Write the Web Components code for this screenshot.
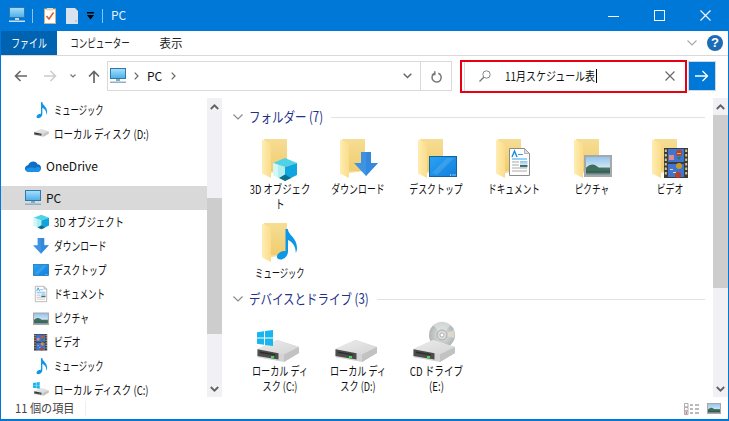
<!DOCTYPE html>
<html lang="ja"><head><meta charset="utf-8"><title>PC</title>
<style>html,body{margin:0;padding:0;background:#fff}</style></head><body>
<x-explorer>
  <x-titlebar slot="top"></x-titlebar>
  <x-ribbon slot="top"></x-ribbon>
  <x-navbar slot="top"></x-navbar>
  <x-sidebar slot="left">
    <x-row icon="note" lvl="1"><x-t style="--sx:.69">ミュージック</x-t></x-row>
    <x-row icon="sdrive" lvl="1"><x-t style="--sx:.79">ローカル ディスク (D:)</x-t></x-row>
    <x-row icon="onedrive" lvl="0" gap><x-t>OneDrive</x-t></x-row>
    <x-row icon="pc" lvl="0" gap selected><x-t>PC</x-t></x-row>
    <x-row icon="cube" lvl="1"><x-t style="--sx:.78">3D オブジェクト</x-t></x-row>
    <x-row icon="arrow" lvl="1"><x-t style="--sx:.73">ダウンロード</x-t></x-row>
    <x-row icon="screen" lvl="1"><x-t style="--sx:.73">デスクトップ</x-t></x-row>
    <x-row icon="doc" lvl="1"><x-t style="--sx:.71">ドキュメント</x-t></x-row>
    <x-row icon="pic" lvl="1"><x-t style="--sx:.73">ピクチャ</x-t></x-row>
    <x-row icon="film" lvl="1"><x-t style="--sx:.74">ビデオ</x-t></x-row>
    <x-row icon="note" lvl="1"><x-t style="--sx:.69">ミュージック</x-t></x-row>
    <x-row icon="sdrivec" lvl="1"><x-t style="--sx:.79">ローカル ディスク (C:)</x-t></x-row>
  </x-sidebar>
  <x-scrollbar slot="left" style="--top:83px;--thumb:136px"></x-scrollbar>
  <x-content slot="main">
    <x-group head="フォルダー (7)" w="90" style="--sx:.82">
      <x-item icon="f3d"><x-t style="--o:center;--sx:.78;--w:82px;--ws:normal">3D オブジェクト</x-t></x-item>
      <x-item icon="fdl"><x-t style="--o:center;--sx:.74">ダウンロード</x-t></x-item>
      <x-item icon="fdesk"><x-t style="--o:center;--sx:.74">デスクトップ</x-t></x-item>
      <x-item icon="fdoc"><x-t style="--o:center;--sx:.72">ドキュメント</x-t></x-item>
      <x-item icon="fpic"><x-t style="--o:center;--sx:.72">ピクチャ</x-t></x-item>
      <x-item icon="fvid"><x-t style="--o:center;--sx:.74">ビデオ</x-t></x-item>
      <x-item icon="fnote"><x-t style="--o:center;--sx:.69">ミュージック</x-t></x-item>
    </x-group>
    <x-group head="デバイスとドライブ (3)" w="146" style="--sx:.82;margin-top:7px">
      <x-item icon="dc"><x-t style="--o:center;--sx:.76;--w:80px;--ws:normal">ローカル ディスク (C:)</x-t></x-item>
      <x-item icon="dd"><x-t style="--o:center;--sx:.76;--w:80px;--ws:normal">ローカル ディスク (D:)</x-t></x-item>
      <x-item icon="de"><x-t style="--o:center;--sx:.8;--w:85px;--ws:normal">CD ドライブ (E:)</x-t></x-item>
    </x-group>
  </x-content>
  <x-scrollbar slot="right" style="--top:0px;--thumb:173px"></x-scrollbar>
  <x-statusbar slot="bottom"></x-statusbar>
</x-explorer>
<script>
const FONT = '"Noto Sans CJK JP","Noto Sans",sans-serif';
const svg = (w,h,body) => `<svg xmlns="http://www.w3.org/2000/svg" width="${w}" height="${h}" viewBox="0 0 ${w} ${h}" style="display:block;overflow:visible">${body}</svg>`;
const G = `<defs>
<linearGradient id="gs" x1="0" y1="0" x2="0" y2="1"><stop offset="0" stop-color="#a9e0fb"/><stop offset="1" stop-color="#4aaeea"/></linearGradient>
<linearGradient id="gb" x1="0" y1="0" x2="0" y2="1"><stop offset="0" stop-color="#f6dd95"/><stop offset="1" stop-color="#f0cd6e"/></linearGradient>
<linearGradient id="gf" x1="0" y1="0" x2="1" y2="0"><stop offset="0" stop-color="#ffedb2"/><stop offset="1" stop-color="#fbdc8a"/></linearGradient>
<linearGradient id="ga" x1="0" y1="0" x2="0" y2="1"><stop offset="0" stop-color="#3f8fe0"/><stop offset="1" stop-color="#3a97ea"/></linearGradient>
<linearGradient id="gd" x1="0" y1="0" x2="1" y2="1"><stop offset="0" stop-color="#2aa3f3"/><stop offset="1" stop-color="#0f7fdd"/></linearGradient>
<linearGradient id="gk" x1="0" y1="0" x2="0" y2="1"><stop offset="0" stop-color="#8dc2ee"/><stop offset=".55" stop-color="#cfe4f3"/><stop offset=".6" stop-color="#4d7d6a"/><stop offset=".8" stop-color="#36574e"/><stop offset="1" stop-color="#a9c6d6"/></linearGradient>
<linearGradient id="gt" x1="0" y1="0" x2="1" y2="1"><stop offset="0" stop-color="#ececec"/><stop offset="1" stop-color="#d4d4d4"/></linearGradient>
<radialGradient id="gc" cx=".5" cy=".5" r=".55"><stop offset="0" stop-color="#eeeeee"/><stop offset=".5" stop-color="#c9cccc"/><stop offset="1" stop-color="#a9b0b0"/></radialGradient>
</defs>`;
const P = {
 folder:`<path d="M8 2H31V34H15Z" fill="url(#gb)"/><path d="M6 2.500 15 6.500V41L6 36.500Z" fill="url(#gf)"/><path d="M15 34H31L15 36Z" fill="#e9c566" opacity=".6"/>`,
 cube:`<path d="M13 1 25 6 13 10 1 6Z" fill="#4fd2e6"/><path d="M1 6 13 10V24L1 18Z" fill="#aeeef1"/><path d="M25 6 13 10V24L25 18Z" fill="#0fa6df"/><path d="M7 21 13 17.500 19 21 13 24Z" fill="#0c6f8c"/><path d="M1 6 6 7.700V20.500L1 18Z" fill="#dcf9f9" opacity=".8"/>`,
 arrow:`<path d="M7 0H17V11H24L12 24 0 11H7Z" fill="url(#ga)"/><path d="M12 0H17V11H24L12 24Z" fill="#2f80d6" opacity=".55"/>`,
 screen:`<rect x=".5" y=".5" width="27" height="20" fill="url(#gd)" stroke="#12639f"/><path d="M3 17 18 2H25L8 19Z" fill="#fff" opacity=".12"/><path d="M21 18.500h1v1h-1zM23.500 18.500h1v1h-1zM25.500 18.500h1v1h-1z" fill="#fff"/>`,
 doc:`<path d="M.5.500H15.500L20.500 5.500V27.500H.5Z" fill="#fff" stroke="#8b8b8b"/><path d="M15.500.500V5.500H20.500Z" fill="#dcdcdc" stroke="#8b8b8b" stroke-width=".6"/><path d="M3 9 5.500 3 8 9" fill="none" stroke="#1b8be0" stroke-width="1.400"/><path d="M9 6.500h5M3 11h15" stroke="#3aa0ea" stroke-width="1.200"/><path d="M3 14h7M3 17h7M3 20h15M3 23h15" stroke="#a8a8a8"/><rect x="11" y="13" width="7.500" height="6.500" fill="url(#gk)"/>`,
 pic:`<rect x="1" y="1" width="26" height="20" fill="url(#gk)" stroke="#a8a8a8" stroke-width="2"/><path d="M2 13C7 8 11 9 15 13L26 15V16H2Z" fill="#3e6e5c"/>`,
 film:`<rect width="24" height="30" fill="#3b3b3b"/><rect x="4" y="1" width="16" height="13" fill="#3f74d2"/><rect x="4" y="16" width="16" height="13" fill="#3f74d2"/><path d="M.8 1.500h2v2.400h-2zM.8 6h2v2.400h-2zM.8 10.500h2v2.400h-2zM.8 15h2v2.400h-2zM.8 19.500h2v2.400h-2zM.8 24h2v2.400h-2zM21.200 1.500h2v2.400h-2zM21.200 6h2v2.400h-2zM21.200 10.500h2v2.400h-2zM21.200 15h2v2.400h-2zM21.200 19.500h2v2.400h-2zM21.200 24h2v2.400h-2z" fill="#d8c98c"/><circle cx="15" cy="5" r="3" fill="#b8402a"/><path d="M13 5h4v1h-4z" fill="#e4b23a"/><path d="M13 9h4l-2 3z" fill="#2e7d3a"/><rect x="5" y="7" width="5" height="5" fill="#e08a8a"/><circle cx="15" cy="18" r="3" fill="#c99a2a"/><circle cx="14" cy="27" r="3" fill="#b8402a"/><path d="M6 21h3v1H6zM9 24h3v1H9z" fill="#f1dc7a"/>`,
 note:`<path d="M11 2V23.500C11 27.500 7.500 31.500 3.500 31.500 .500 31.500-1 29.500 .500 26.800 2 24.200 6 22.500 8.500 23.200V1H10.800C11 7 20 9.500 20 20 20 22 19.400 24 18.800 25 18.800 18 15 13.600 11 12Z" fill="#0c97e8" transform="translate(1 0)"/>`,
 drive:`<path d="M.5 9 19 .5C20 .100 21 .100 22 .400L42 7V13L27 22 1.500 17.500C.7 17.300 .3 16.800 .3 16Z" fill="#d4d4d4"/><path d="M.5 9 19 .5C20 .100 21 .100 22 .400L42 7 27 14.500Z" fill="url(#gt)"/><path d="M27 14.500 42 7V13L27 22Z" fill="#c2c2c2"/><path d="M.5 9.300 21.500 13.300V19.500L.5 16Z" fill="#4c4c4c"/><path d="M3 11.500 18 14.300V15.500L3 13Z" fill="#2c2c2c"/><rect x="14" y="16" width="3" height="2" fill="#3fdc4a"/>`,
 win:`<path d="M0 2.200 7 1.200V7.500H0ZM8 1 16 0V7.500H8ZM0 8.500H7V14.800L0 13.800ZM8 8.500H16V16L8 15Z" fill="#19b6ee"/>`,
 disc:`<circle cx="13" cy="13" r="13" fill="url(#gc)"/><path d="M13 13 4 3A13 13 0 0 1 22 3Z" fill="#e6eae6" opacity=".6"/><path d="M13 13 25 8A13 13 0 0 1 25 16Z" fill="#e8e2d0" opacity=".7"/><circle cx="13" cy="13" r="5" fill="#dcdcdc" stroke="#aaa"/><circle cx="13" cy="13" r="2" fill="#fff" stroke="#999" stroke-width=".7"/>`,
};
const at=(x,y,b,s)=>`<g transform="translate(${x} ${y})${s?` scale(${s})`:''}">${b}</g>`;
const I = {
 pc:()=>svg(16,16,G+`<rect x=".5" y=".5" width="15" height="10" fill="url(#gs)" stroke="#2e7aa8"/><rect x="6" y="11" width="4" height="2" fill="#8aa7b8"/><rect y="13.500" width="16" height="1.500" fill="#8fb0c6"/>`),
 note:()=>svg(16,16,at(3,-.5,P.note,.53)),
 sdrive:()=>svg(16,16,G+at(1,3,P.drive,.35)),
 sdrivec:()=>svg(16,16,G+at(1,6,P.drive,.35)+at(0,0,P.win,.42)),
 onedrive:()=>svg(16,16,`<path d="M4 14C1.500 14 0 12.500 0 10.500 0 8.500 1.500 7.500 3 7.300 3.800 5 6 3.500 8.300 3.500 10.300 3.500 11.800 4.500 12.500 6.200 14.500 6.300 16 7.800 16 10 16 12.300 14.500 14 12.500 14Z" fill="#0f6fc6"/><path d="M4 14C2.500 14 1 13 .7 11.500 3 9 8 9 10 10.500 12 8.500 15 8.500 15.600 11.500 15 13 14 14 12.500 14Z" fill="#1a93e6"/>`),
 cube:()=>svg(16,16,at(0,0,P.cube,.64)),
 arrow:()=>svg(16,16,G+at(0,0,P.arrow,.66)),
 screen:()=>svg(16,16,G+at(0,2,P.screen,.57)),
 doc:()=>svg(16,16,G+at(2,0,P.doc,.57)),
 pic:()=>svg(16,16,G+at(0,2.500,P.pic,.57)),
 film:()=>svg(16,16,at(1,0,P.film,.55)),
 f3d:()=>svg(48,46,G+P.folder+at(16,20,P.cube)),
 fdl:()=>svg(48,46,G+P.folder+at(20,15,P.arrow)),
 fdesk:()=>svg(48,46,G+P.folder+at(17,19,P.screen)),
 fdoc:()=>svg(48,46,G+P.folder+at(19,11,P.doc)),
 fpic:()=>svg(48,46,G+P.folder+at(16,18,P.pic)),
 fvid:()=>svg(48,46,G+P.folder+at(18,11,P.film)),
 fnote:()=>svg(48,46,G+P.folder+at(20,7,P.note)),
 dc:()=>svg(48,46,G+at(1,21,P.drive)+at(1,11,P.win)),
 dd:()=>svg(48,46,G+at(1,21,P.drive)),
 de:()=>svg(48,46,G+at(17,3,P.disc)+at(1,21,P.drive)),
};
const define=(n,css,html)=>customElements.define(n,class extends HTMLElement{
  constructor(){super();const r=this.attachShadow({mode:'open'});r.innerHTML=`<style>${css}</style>`+html;}
});
customElements.define('x-icon',class extends HTMLElement{
  constructor(){super();const r=this.attachShadow({mode:'open'});r.innerHTML=`<style>:host{display:block;flex:none}</style>`+I[this.getAttribute('name')]();}
});
define('x-t',`:host{display:inline-flex;line-height:15px;font-size:inherit}
span{display:inline-block;width:var(--w,auto);white-space:var(--ws,nowrap);text-align:center;transform:translateY(-1px) scaleX(var(--sx,1));transform-origin:var(--o,left) 50%}`,`<span><slot></slot></span>`);
define('x-explorer',`:host{display:flex;flex-direction:column;box-sizing:border-box;width:729px;height:421px;overflow:hidden;border:solid #0078d7;border-width:0 1px 2px 1px;background:#fff;font:12px/15px ${FONT};color:#111}
.main{flex:1;min-height:0;display:flex;padding-top:2px}
.left{display:flex;flex:none}.mid{flex:1;min-width:0;margin-left:3px;display:flex}`,
`<slot name="top"></slot><div class="main"><div class="left"><slot name="left"></slot></div><div class="mid"><slot name="main"></slot></div><slot name="right"></slot></div><slot name="bottom"></slot>`);
define('x-titlebar',`:host{display:flex;align-items:center;height:31px;background:#0078d7;color:#e6f1fb;padding:0 0 0 8px;box-sizing:border-box}
.sep{width:1px;height:14px;background:#8fc4ee;margin:0}
.doc{margin-left:11px}.page{margin-left:10px}
.dd{margin-left:9px}.t{margin-left:8px;font-size:12px}
.sp{flex:1}.b{width:46px;height:31px;display:flex;align-items:center;justify-content:center}`,
`<div style="display:flex;margin-top:-1px">${svg(16,16,G+`<rect x=".5" y=".5" width="15" height="10" fill="url(#gs)" stroke="#2e7aa8"/><rect x="6" y="11" width="4" height="2" fill="#bcd6e8"/><rect y="13.500" width="16" height="1.500" fill="#c9dff0"/>`)}</div>
<div class="sep" style="margin-left:7px"></div>
<div class="doc">${svg(12,16,`<rect x=".5" y="1" width="11" height="14.500" fill="#fff" stroke="#c9b58d"/><rect x="3" y="0" width="6" height="2.500" fill="#e6d8b8"/><path d="M2.500 8 5 11 9.500 4.500" fill="none" stroke="#e2572b" stroke-width="1.500"/>`)}</div>
<div class="page">${svg(12,16,`<path d="M0 0H9L12 3V16H0Z" fill="#d9e3ef"/><path d="M9 12H12L9 15Z" fill="#b9c9da"/>`)}</div>
<div class="dd">${svg(7,8,`<rect x="0" y="0" width="7" height="1.500" fill="#000"/><path d="M0 3H7L3.500 7.500Z" fill="#000"/>`)}</div>
<div class="sep" style="margin-left:8px"></div>
<x-t class="t">PC</x-t><div class="sp"></div>
<div class="b">${svg(11,11,`<path d="M0 6.500H11" stroke="#fff"/>`)}</div>
<div class="b">${svg(11,11,`<rect x=".5" y=".5" width="10" height="10" fill="none" stroke="#fff"/>`)}</div>
<div class="b">${svg(11,11,`<path d="M.5.500 10.500 10.500M10.500.500 .5 10.500" stroke="#fff" stroke-width="1.100"/>`)}</div>`);
define('x-ribbon',`:host{display:flex;align-items:stretch;height:25px;box-sizing:border-box;border-bottom:1px solid #d9d9d9;background:#fff}
.tab{display:flex;align-items:center;justify-content:center;color:#222}
.file{width:56px;background:#0063b1;color:#fff}.comp{width:87px}.show{width:54px}
.sp{flex:1}.r{display:flex;align-items:center;gap:10px;padding-right:5px}
.help{width:16px;height:16px;border-radius:50%;background:#1b6cb5;color:#fff;font:bold 13px/16px "Liberation Sans",sans-serif;text-align:center}`,
`<div class="tab file"><x-t style="--o:center;--sx:.74">ファイル</x-t></div>
<div class="tab comp"><x-t style="--o:center;--sx:.71">コンピューター</x-t></div>
<div class="tab show"><x-t style="--o:center;--sx:.96">表示</x-t></div><div class="sp"></div>
<div class="r">${svg(10,6,`<path d="M.5.500 5 5 9.500.500" fill="none" stroke="#aaa" stroke-width="1.200"/>`)}<div class="help">?</div></div>`);
define('x-navbar',`:host{display:flex;align-items:center;height:40px;box-sizing:border-box;padding-left:4px;background:#fff}
.n{display:flex;justify-content:center;align-items:center;flex:none}
.addr{box-sizing:border-box;width:345px;height:30px;border:1px solid #d9d9d9;display:flex;align-items:center;padding-left:2px;color:#111}
.search{box-sizing:border-box;width:227px;height:33px;margin-left:8px;border:2px solid #e60012;box-shadow:inset 2px 0 0 #fff,inset 3px 0 0 #d9d9d9;display:flex;align-items:center;padding-left:17px}
.go{box-sizing:border-box;width:28px;height:30px;margin-left:1px;background:#0078d7;border:1px solid #cfd8df;display:flex;align-items:center;justify-content:center}
.caret{width:1px;height:14px;background:#000;flex:none}
.r{margin-left:auto;display:flex;align-items:center;height:100%}.v{width:1px;height:100%;background:#d9d9d9}`,
`<div class="n" style="width:30px">${svg(13,12,`<path d="M13 6H1.500M6.500 1 1.500 6 6.500 11" fill="none" stroke="#666" stroke-width="1.600"/>`)}</div>
<div class="n" style="width:30px">${svg(13,12,`<path d="M0 6H11.500M6.500 1 11.500 6 6.500 11" fill="none" stroke="#ccc" stroke-width="1.600"/>`)}</div>
<div class="n" style="width:16px">${svg(6,4,`<path d="M.5.500 3 3 5.500.500" fill="none" stroke="#777" stroke-width="1.200"/>`)}</div>
<div class="n" style="width:26px">${svg(12,13,`<path d="M6 13V1.500M1 6.500 6 1.500 11 6.500" fill="none" stroke="#666" stroke-width="1.700"/>`)}</div>
<div class="addr"><x-icon name="pc"></x-icon><span style="margin:0 0 0 8px;display:flex">${svg(5,8,`<path d="M.7.700 4 4 .7 7.300" fill="none" stroke="#666" stroke-width="1.200"/>`)}</span><x-t style="margin-left:8px">PC</x-t><span style="margin-left:9px;display:flex">${svg(5,8,`<path d="M.7.700 4 4 .7 7.300" fill="none" stroke="#666" stroke-width="1.200"/>`)}</span>
<div class="r"><span style="margin-right:8px;display:flex">${svg(9,6,`<path d="M.7.700 4.500 4.500 8.300.700" fill="none" stroke="#666" stroke-width="1.500"/>`)}</span><div class="v"></div><span style="width:30px;display:flex;justify-content:center">${svg(11,12,`<path d="M7 2.200A4.600 4.600 0 1 1 3 2.500M3.500.200V3.500H.5" transform="translate(.3 1)" fill="none" stroke="#777" stroke-width="1.500"/>`)}</span></div></div>
<div class="search">${svg(12,12,`<circle cx="7.500" cy="4.500" r="3.700" fill="none" stroke="#888"/><path d="M4.800 7.200 .5 11.500" stroke="#777" stroke-width="1.300"/>`)}<x-t style="margin-left:14px;--sx:.83;width:91px">11月スケジュール表</x-t><div class="caret"></div>
<span style="margin-left:auto;margin-right:10px;display:flex">${svg(10,10,`<path d="M.5.500 9.500 9.500M9.500.500 .5 9.500" stroke="#666" stroke-width="1.100"/>`)}</span></div>
<div class="go">${svg(14,12,`<path d="M0 6H12.500M7.500 1 12.500 6 7.500 11" fill="none" stroke="#fff" stroke-width="1.300"/>`)}</div>`);
define('x-sidebar',`:host{display:block;width:206px;height:299px;overflow:hidden;flex:none}`,`<slot></slot>`);
customElements.define('x-row',class extends HTMLElement{
  constructor(){super();const r=this.attachShadow({mode:'open'});
   const lvl=+this.getAttribute('lvl');
   r.innerHTML=`<style>:host{display:flex;align-items:center;height:24px;gap:5px;padding-left:${lvl?32:24}px;box-sizing:border-box}
   :host([gap]){margin-top:8px}:host([selected]){background:#d9d9d9}</style><x-icon name="${this.getAttribute('icon')}"></x-icon><slot></slot>`;}
});
define('x-scrollbar',`:host{display:flex;flex-direction:column;flex:none;width:15px;height:299px;background:repeating-conic-gradient(#f5f0f4 0 25%,#edf1f6 0 50%) 0 0/2px 2px}
.a{height:17px;flex:none;display:flex;align-items:center;justify-content:center}
.tr{flex:1;padding-top:var(--top)}
.th{height:var(--thumb);background:#cdcdcd}`,
`<div class="a">${svg(9,6,`<path d="M.8 5 4.500 1.300 8.200 5" fill="none" stroke="#606060" stroke-width="1.800"/>`)}</div><div class="tr"><div class="th"></div></div><div class="a">${svg(9,6,`<path d="M.8 1 4.500 4.700 8.200 1" fill="none" stroke="#606060" stroke-width="1.800"/>`)}</div>`);
define('x-content',`:host{display:block;flex:1;min-width:0;padding-top:8px;overflow:hidden}`,`<slot></slot>`);
customElements.define('x-group',class extends HTMLElement{
  constructor(){super();const r=this.attachShadow({mode:'open'});
   r.innerHTML=`<style>:host{display:block}
   .h{display:flex;align-items:center;height:22px;padding-left:8px;color:#1e3287;font-size:14px}
   .c{flex:none;margin-right:6px}.l{flex:none;width:calc(${this.getAttribute('w')}px * var(--sx))}
   .line{flex:1;height:1px;background:#e2e2e2;margin:0 8px 0 8px}
   .g{display:grid;grid-template-columns:repeat(6,78px);row-gap:9px;padding-left:16px;margin-top:9px}</style>
   <div class="h"><span class="c">${svg(10,6,`<path d="M.5.500 5 5 9.500.500" fill="none" stroke="#888" stroke-width="1.100"/>`)}</span><div class="l"><x-t>${this.getAttribute('head')}</x-t></div><div class="line"></div></div>
   <div class="g"><slot></slot></div>`;}
});
customElements.define('x-item',class extends HTMLElement{
  constructor(){super();const r=this.attachShadow({mode:'open'});
   r.innerHTML=`<style>:host{display:flex;flex-direction:column;align-items:center;width:78px;color:#111}
   .lab{display:flex;flex-direction:column;align-items:center;margin-top:-1px;width:100%}</style>
   <x-icon name="${this.getAttribute('icon')}"></x-icon><div class="lab"><slot></slot></div>`;}
});
define('x-statusbar',`:host{display:flex;align-items:center;height:21px;box-sizing:border-box;padding-left:14px;background:#fff;color:#444}
.s{width:1px;height:15px;background:#eef0f2;margin-left:10px}.sp{flex:1}.r{display:flex;align-items:center;gap:7px;padding-right:7px}`,
`<x-t style="--sx:.93;width:60px">11 個の項目</x-t><div class="s"></div><div class="sp"></div>
<div class="r">${svg(16,12,`<path d="M.5.500h3.500v3.500H.5zM.5 4.300h3.500v3.500H.5zM.5 8.100h3.500v3.500H.5z" fill="#fff" stroke="#999" stroke-width=".8"/><path d="M6 2h3M11 2h4M6 6h3M11 6h4M6 10h3M11 10h4" stroke="#777"/><rect x="1.600" y="9.300" width="1.400" height="1.400" fill="#b33"/>`)}${svg(14,11,G+at(0,0,P.pic,.5))}</div>`);
</script>
</body></html>
